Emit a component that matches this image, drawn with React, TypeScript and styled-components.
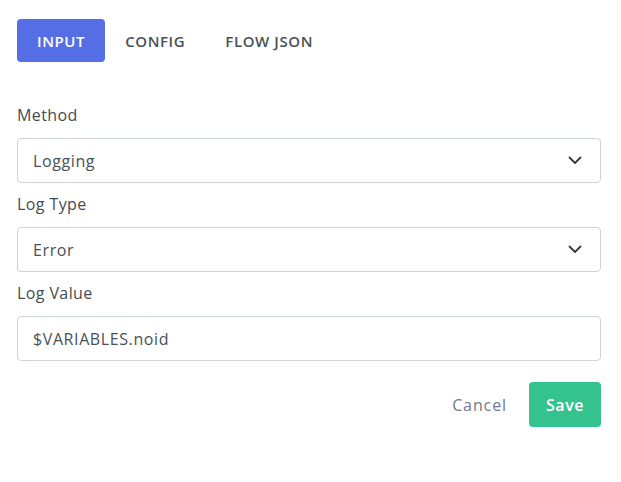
import React from "react";
import styled, { createGlobalStyle } from "styled-components";

const Global = createGlobalStyle`
  html, body { margin: 0; padding: 0; background: #fff; }
  body { font-family: "Open Sans", "Noto Sans", sans-serif; color: #495057; }
  * { box-sizing: border-box; }
`;

const Page = styled.div`
  padding: 19px 20px 40px 17px;
  display: flex;
  flex-direction: column;
`;

const Tabs = styled.div`
  display: flex;
  align-items: center;
  margin-bottom: 42px;
`;

const Tab = styled.button<{ $active?: boolean }>`
  height: 43px;
  padding: 0 20px;
  border: none;
  border-radius: 4px;
  font-family: inherit;
  font-size: 15px;
  font-weight: 600;
  letter-spacing: 0.6px;
  background: ${(p) => (p.$active ? "#556ee6" : "transparent")};
  color: ${(p) => (p.$active ? "#fff" : "#495057")};
  cursor: pointer;
`;

const Group = styled.div`
  display: flex;
  flex-direction: column;
  margin-bottom: 10px;
`;

const Label = styled.label`
  font-size: 16px;
  line-height: 22px;
  font-weight: 500;
  letter-spacing: 0.4px;
  color: #454b51;
  margin-bottom: 12px;
`;

const Field = styled.div`
  height: 45px;
  border: 1px solid #ced4da;
  border-radius: 4px;
  display: flex;
  align-items: center;
  justify-content: space-between;
  padding: 0 18px 0 15px;
  font-size: 16px;
  letter-spacing: 0.6px;
  color: #495057;
`;

const Actions = styled.div`
  display: flex;
  justify-content: flex-end;
  align-items: center;
  gap: 20px;
  margin-top: 11px;
`;

const CancelBtn = styled.button`
  background: none;
  border: none;
  font-family: inherit;
  font-size: 16px;
  letter-spacing: 0.9px;
  color: #74788d;
  padding: 0 2px;
  cursor: pointer;
`;

const SaveBtn = styled.button`
  height: 45px;
  width: 72px;
  padding: 0;
  background: #34c38f;
  color: #fff;
  border: none;
  border-radius: 4px;
  font-family: inherit;
  font-size: 16px;
  font-weight: 600;
  letter-spacing: 0.6px;
  cursor: pointer;
`;

const Chevron = () => (
  <svg width="14" height="9" viewBox="0 0 14 9" fill="none">
    <path d="M1.5 1.5 L7 7 L12.5 1.5" stroke="#343a40" strokeWidth="1.8" strokeLinecap="round" strokeLinejoin="round" />
  </svg>
);

export default function App() {
  return (
    <>
      <Global />
      <Page>
        <Tabs>
          <Tab $active>INPUT</Tab>
          <Tab>CONFIG</Tab>
          <Tab>FLOW JSON</Tab>
        </Tabs>
        <Group>
          <Label>Method</Label>
          <Field>
            <span>Logging</span>
            <Chevron />
          </Field>
        </Group>
        <Group>
          <Label>Log Type</Label>
          <Field>
            <span>Error</span>
            <Chevron />
          </Field>
        </Group>
        <Group>
          <Label>Log Value</Label>
          <Field>
            <span>$VARIABLES.noid</span>
          </Field>
        </Group>
        <Actions>
          <CancelBtn>Cancel</CancelBtn>
          <SaveBtn>Save</SaveBtn>
        </Actions>
      </Page>
    </>
  );
}
